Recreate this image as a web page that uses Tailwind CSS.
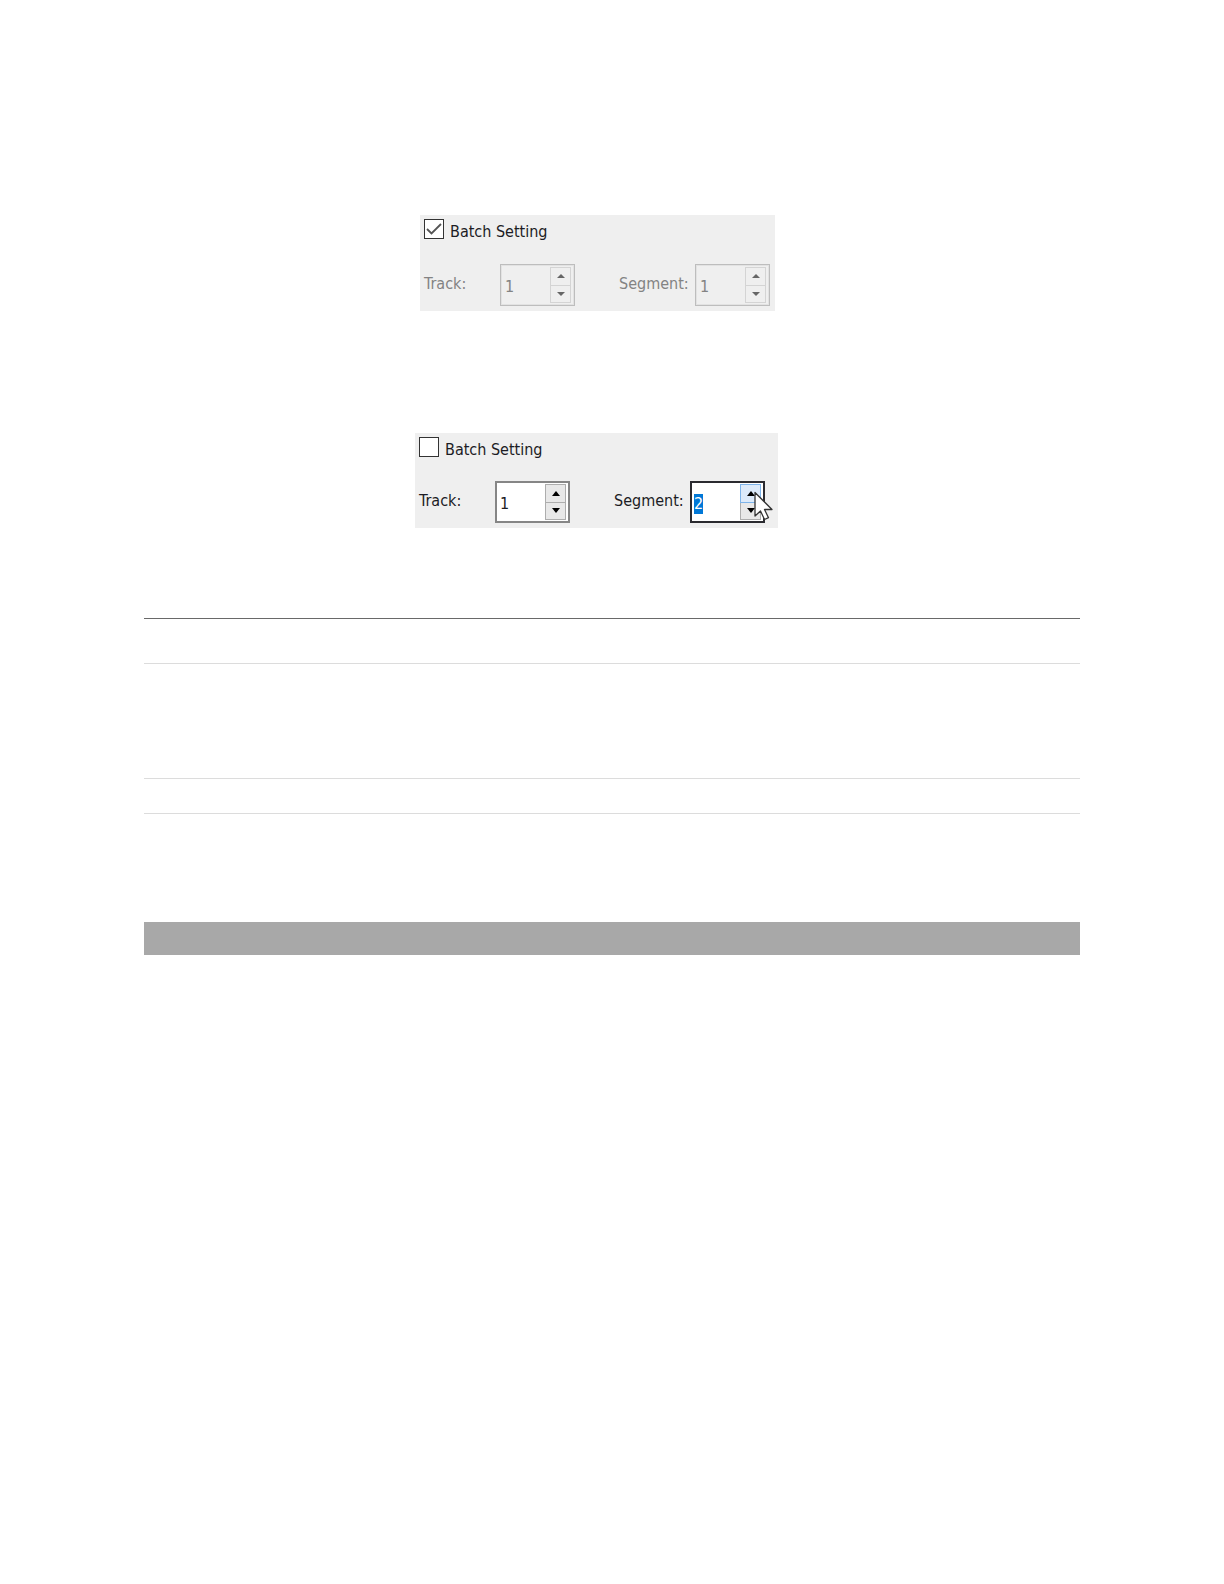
<!DOCTYPE html>
<html lang="en">
<head>
<meta charset="utf-8">
<meta name="viewport" content="width=device-width, initial-scale=1">
<title>Batch Setting</title>
<script src="https://cdn.jsdelivr.net/npm/@tailwindcss/browser@4"></script>
</head>
<body class="bg-white text-black text-base font-['DejaVu_Sans_Condensed','DejaVu_Sans',sans-serif]">
<main class="px-36 pt-[215px] pb-20">

  <!-- Batch mode on: the spin boxes are disabled -->
  <section class="flex justify-center pr-[29px]">
    <form class="w-[355px] bg-[#efefef] px-1 pt-1 pb-[5px] text-[#838383]">
      <div class="flex h-[25px] gap-1.5 text-[#1c1c24]">
        <span class="relative size-5">
          <input id="batch-on" type="checkbox" checked class="block size-5 appearance-none border border-[#333] bg-white">
          <svg class="pointer-events-none absolute inset-0 size-5" viewBox="0 0 20 20" fill="none" stroke="#555" stroke-width="1.8"><path d="M3 10l4.500 4.500L17 5"/></svg>
        </span>
        <label for="batch-on" class="leading-[26px]">Batch Setting</label>
      </div>
      <div class="mt-5 flex">
        <label for="track-off" class="w-[76px] leading-10">Track:</label>
        <div class="flex h-[42px] w-[75px] border border-[#bdbdbd] py-0.5 pr-[3px] pl-0.5 outline outline-[#e2e2e2] -outline-offset-2">
          <input id="track-off" type="text" value="1" disabled class="w-0 grow pt-1 pl-0.5 leading-5">
          <div class="flex w-[21px] flex-col border border-[#d4d4d4]">
            <button type="button" disabled aria-label="Track up" class="flex flex-1 items-center justify-center border-b border-[#d4d4d4]"><svg class="h-1 w-2" viewBox="0 0 8 4"><path d="M0 4L4 0l4 4z" fill="#666"/></svg></button>
            <button type="button" disabled aria-label="Track down" class="flex flex-1 items-center justify-center"><svg class="h-1 w-2" viewBox="0 0 8 4"><path d="M0 0l4 4 4-4z" fill="#666"/></svg></button>
          </div>
        </div>
        <label for="segment-off" class="ml-11 w-[76px] leading-10">Segment:</label>
        <div class="flex h-[42px] w-[75px] border border-[#bdbdbd] py-0.5 pr-[3px] pl-0.5 outline outline-[#e2e2e2] -outline-offset-2">
          <input id="segment-off" type="text" value="1" disabled class="w-0 grow pt-1 pl-0.5 leading-5">
          <div class="flex w-[21px] flex-col border border-[#d4d4d4]">
            <button type="button" disabled aria-label="Segment up" class="flex flex-1 items-center justify-center border-b border-[#d4d4d4]"><svg class="h-1 w-2" viewBox="0 0 8 4"><path d="M0 4L4 0l4 4z" fill="#666"/></svg></button>
            <button type="button" disabled aria-label="Segment down" class="flex flex-1 items-center justify-center"><svg class="h-1 w-2" viewBox="0 0 8 4"><path d="M0 0l4 4 4-4z" fill="#666"/></svg></button>
          </div>
        </div>
      </div>
    </form>
  </section>

  <!-- Batch mode off: track and segment can be chosen -->
  <section class="mt-[122px] flex justify-center pr-[31px]">
    <form class="w-[363px] bg-[#efefef] px-1 pt-1 pb-[5px] text-[#1c1c24]">
      <div class="flex h-6 gap-1.5">
        <input id="batch-off" type="checkbox" class="block size-5 appearance-none border border-[#333] bg-white">
        <label for="batch-off" class="leading-[26px]">Batch Setting</label>
      </div>
      <div class="mt-5 flex">
        <label for="track" class="w-[76px] leading-10">Track:</label>
        <div class="flex h-[42px] w-[75px] border-2 border-[#868686] bg-white py-px pr-0.5 pl-px">
          <input id="track" type="text" value="1" class="w-0 grow pt-1 pl-0.5 leading-5 outline-none">
          <div class="flex w-[21px] flex-col border border-[#adadad] bg-[#e8e8e8]">
            <button type="button" aria-label="Track up" class="flex flex-1 items-center justify-center border-b border-[#adadad]"><svg class="h-[5px] w-2" viewBox="0 0 8 5"><path d="M0 5l4-5 4 5z" fill="#000"/></svg></button>
            <button type="button" aria-label="Track down" class="flex flex-1 items-center justify-center"><svg class="h-[5px] w-2" viewBox="0 0 8 5"><path d="M0 0l4 5 4-5z" fill="#000"/></svg></button>
          </div>
        </div>
        <label for="segment" class="ml-11 w-[76px] leading-10">Segment:</label>
        <div class="relative flex h-[42px] w-[75px] border-2 border-[#2b2b30] bg-white py-px pr-0.5 pl-px">
          <input id="segment" type="text" value="2" autofocus class="w-0 grow pt-1 pl-px leading-5 outline-none selection:bg-[#0078d7] selection:text-white">
          <div class="flex w-[21px] flex-col border border-[#adadad] bg-[#e8e8e8]">
            <button type="button" aria-label="Segment up" class="-mx-px -mt-px flex flex-1 items-center justify-center border border-[#7eb4ea] bg-[#dceafa]"><svg class="h-[5px] w-2" viewBox="0 0 8 5"><path d="M0 5l4-5 4 5z" fill="#000"/></svg></button>
            <button type="button" aria-label="Segment down" class="flex flex-1 items-center justify-center"><svg class="h-[5px] w-2" viewBox="0 0 8 5"><path d="M0 0l4 5 4-5z" fill="#000"/></svg></button>
          </div>
          <svg class="pointer-events-none absolute top-2 left-[62px] h-[30px] w-5" viewBox="0 0 20 30"><path d="M1 1.500V25l5.500-5 4 8.500 4-1.800-4-8.200H18z" fill="#fff" stroke="#333" stroke-width="1.300" stroke-linejoin="round"/></svg>
        </div>
      </div>
    </form>
  </section>

  <!-- Ruled rows, all blank -->
  <div class="mt-[90px] border-t border-[#696969]">
    <div class="h-[45px] border-b border-[#dcdcdc]"></div>
    <div class="h-[115px] border-b border-[#dcdcdc]"></div>
    <div class="h-[35px] border-b border-[#dcdcdc]"></div>
  </div>
  <div class="mt-[108px] h-[33px] bg-[#a8a8a8]"></div>
</main>
<script>
  const segment = document.getElementById('segment');
  segment.focus();
  segment.select();
</script>
</body>
</html>
